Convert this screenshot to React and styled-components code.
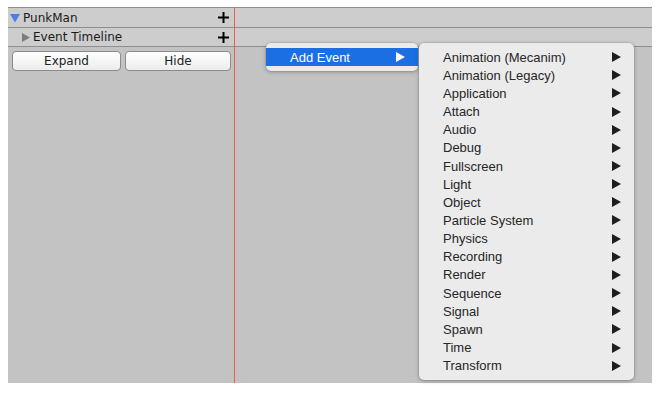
import React from "react";
import styled, { createGlobalStyle } from "styled-components";

const Global = createGlobalStyle`
  html, body { margin: 0; padding: 0; background: #ffffff; }
  body { width: 657px; height: 393px; overflow: hidden; }
`;

const Page = styled.div`
  padding: 7px 5px 10px 8px;
  width: 644px;
  height: 376px;
`;

const Panel = styled.div`
  position: relative;
  width: 644px;
  height: 376px;
  background: #c3c3c3;
  display: flex;
  flex-direction: column;
  font-family: "DejaVu Sans", sans-serif;
  font-size: 12px;
  color: #1a1a1a;
`;

const Row = styled.div`
  height: ${(p) => p.$h}px;
  border-top: 1px solid #8e8e8e;
  border-bottom: ${(p) => (p.$last ? "1px solid #8e8e8e" : "none")};
  background: #cdcdcd;
  display: grid;
  grid-template-columns: 226px 1fr;
`;

const Cell = styled.div`
  display: flex;
  align-items: center;
  padding-left: ${(p) => p.$indent}px;
  padding-right: 5px;
  gap: 3px;
`;

const Label = styled.span`
  flex: 1;
  white-space: nowrap;
`;

const Buttons = styled.div`
  display: grid;
  grid-template-columns: 109px 106px;
  gap: 4px;
  padding: 4px 0 0 4px;
`;

const Button = styled.div`
  height: 18px;
  border: 1px solid #8b8b8b;
  border-radius: 4px;
  background: linear-gradient(#ffffff, #ececec);
  display: flex;
  align-items: center;
  justify-content: center;
  font-size: 12px;
  color: #222;
`;

const Playhead = styled.div`
  position: absolute;
  left: 226px;
  top: 0;
  bottom: 0;
  width: 1px;
  background: #ee5d52;
`;

const Menu = styled.div`
  position: absolute;
  left: ${(p) => p.$x}px;
  top: ${(p) => p.$y}px;
  width: ${(p) => p.$w}px;
  padding: 5px 0;
  background: #ebebeb;
  border-radius: 5px;
  box-shadow: 0 1px 4px rgba(0, 0, 0, 0.28), 0 0 0 0.5px rgba(0, 0, 0, 0.12);
  font-family: "Liberation Sans", Arial, sans-serif;
  font-size: 13px;
  color: #262626;
`;

const Item = styled.div`
  height: ${(p) => p.$h}px;
  display: flex;
  align-items: center;
  padding: 0 13px 0 24px;
  background: ${(p) => (p.$active ? "#1b6fe2" : "transparent")};
  color: ${(p) => (p.$active ? "#ffffff" : "inherit")};
`;

const ItemText = styled.span`
  flex: 1;
  white-space: nowrap;
`;

const Plus = () => (
  <svg width="11" height="11" viewBox="0 0 11 11">
    <rect x="4.5" y="0" width="2" height="11" fill="#000" />
    <rect x="0" y="4.5" width="11" height="2" fill="#000" />
  </svg>
);

const Tri = ({ color, dir, size = 9 }) =>
  dir === "down" ? (
    <svg width={size} height={size} viewBox="0 0 10 10">
      <polygon points="0,1 10,1 5,9.5" fill={color} />
    </svg>
  ) : (
    <svg width={size} height={size + 1} viewBox="0 0 9 10">
      <polygon points="0,0 9,5 0,10" fill={color} />
    </svg>
  );

const items = [
  "Animation (Mecanim)",
  "Animation (Legacy)",
  "Application",
  "Attach",
  "Audio",
  "Debug",
  "Fullscreen",
  "Light",
  "Object",
  "Particle System",
  "Physics",
  "Recording",
  "Render",
  "Sequence",
  "Signal",
  "Spawn",
  "Time",
  "Transform",
];

export default function App() {
  return (
    <>
      <Global />
      <Page>
        <Panel>
          <Row $h={19}>
            <Cell $indent={2}>
              <Tri dir="down" color="#4f7fe6" size={10} />
              <Label>PunkMan</Label>
              <Plus />
            </Cell>
            <div />
          </Row>
          <Row $h={18} $last>
            <Cell $indent={14}>
              <Tri dir="right" color="#7c7c7c" size={8} />
              <Label>Event Timeline</Label>
              <Plus />
            </Cell>
            <div />
          </Row>
          <Buttons>
            <Button>Expand</Button>
            <Button>Hide</Button>
          </Buttons>
          <Playhead />
          <Menu $x={258} $y={36} $w={152}>
            <Item $h={18} $active>
              <ItemText>Add Event</ItemText>
              <Tri dir="right" color="#ffffff" size={9} />
            </Item>
          </Menu>
          <Menu $x={411} $y={36} $w={215}>
            {items.map((t) => (
              <Item key={t} $h={18.17}>
                <ItemText>{t}</ItemText>
                <Tri dir="right" color="#1e1e1e" size={9} />
              </Item>
            ))}
          </Menu>
        </Panel>
      </Page>
    </>
  );
}
